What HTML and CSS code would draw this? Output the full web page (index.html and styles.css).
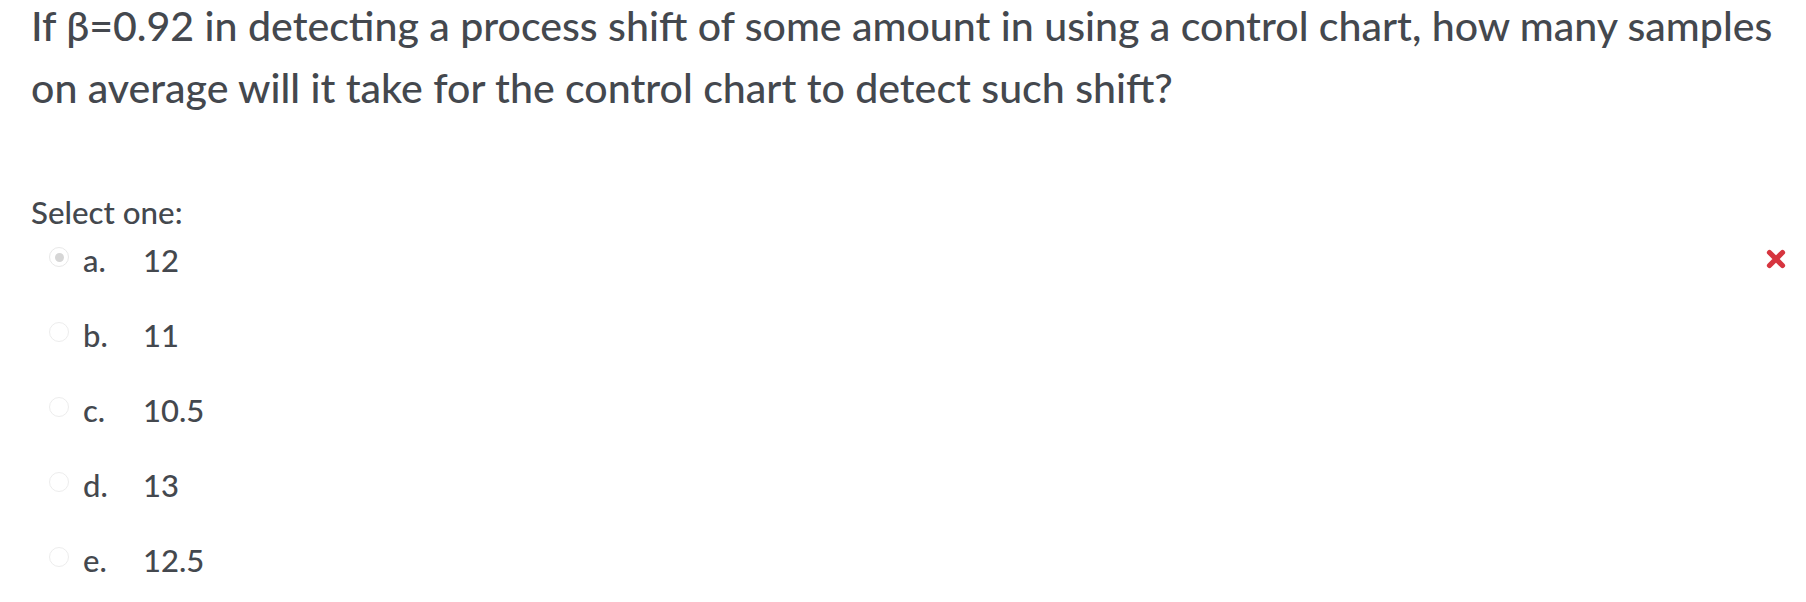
FILE: index.html
```html
<!DOCTYPE html>
<html>
<head>
<meta charset="utf-8">
<link rel="stylesheet" href="styles.css">
</head>
<body>
<div class="que">
  <div class="qtext">
    <span class="qline">If β=0.92 in detecting a process shift of some amount in using a control chart, how many samples</span>
    <span class="qline">on average will it take for the control chart to detect such shift?</span>
  </div>
  <div class="ablock">
    <div class="prompt">Select one:</div>
    <div class="answer">
      <div class="row">
        <span class="radio checked"></span>
        <span class="num">a.</span>
        <span class="val">12</span>
        <svg class="wrong" width="22" height="22" viewBox="0 0 22 22"><path d="M4.5 4.5 L17.5 17.5 M17.5 4.5 L4.5 17.5" stroke="#d6353f" stroke-width="5.2" stroke-linecap="round"/></svg>
      </div>
      <div class="row">
        <span class="radio"></span>
        <span class="num">b.</span>
        <span class="val">11</span>
      </div>
      <div class="row">
        <span class="radio"></span>
        <span class="num">c.</span>
        <span class="val">10.5</span>
      </div>
      <div class="row">
        <span class="radio"></span>
        <span class="num">d.</span>
        <span class="val">13</span>
      </div>
      <div class="row">
        <span class="radio"></span>
        <span class="num">e.</span>
        <span class="val">12.5</span>
      </div>
    </div>
  </div>
</div>
</body>
</html>
```

FILE: styles.css
```css
html, body {
  margin: 0;
  padding: 0;
  background: #ffffff;
}
body {
  font-family: Lato, "Noto Sans", sans-serif;
  font-weight: 500;
  color: #44484e;
}
.que {
  padding: 0 19px 0 31px;
}
.qtext {
  display: flex;
  flex-direction: column;
  gap: 12px;
  font-size: 41.1px;
  line-height: 50px;
}
.qline {
  display: block;
  white-space: nowrap;
}
.ablock {
  margin-top: 85px;
}
.prompt {
  font-size: 31.3px;
  line-height: 30px;
}
.answer {
  display: flex;
  flex-direction: column;
}
.row {
  display: flex;
  align-items: flex-start;
  height: 75px;
  box-sizing: border-box;
  padding: 15px 0 23px;
  font-size: 31px;
  line-height: 37px;
}
.radio {
  width: 20px;
  height: 20px;
  border: 1px solid #ededed;
  border-radius: 50%;
  box-sizing: border-box;
  margin: 5px 14px 0 18px;
  display: flex;
  align-items: center;
  justify-content: center;
}
.radio.checked {
  border-color: #e8e8e8;
}
.radio.checked::after {
  content: "";
  width: 9px;
  height: 9px;
  border-radius: 50%;
  background: #d6d6d6;
}
.num {
  width: 60px;
}
.wrong {
  margin-left: auto;
  margin-top: 6px;
}
```
